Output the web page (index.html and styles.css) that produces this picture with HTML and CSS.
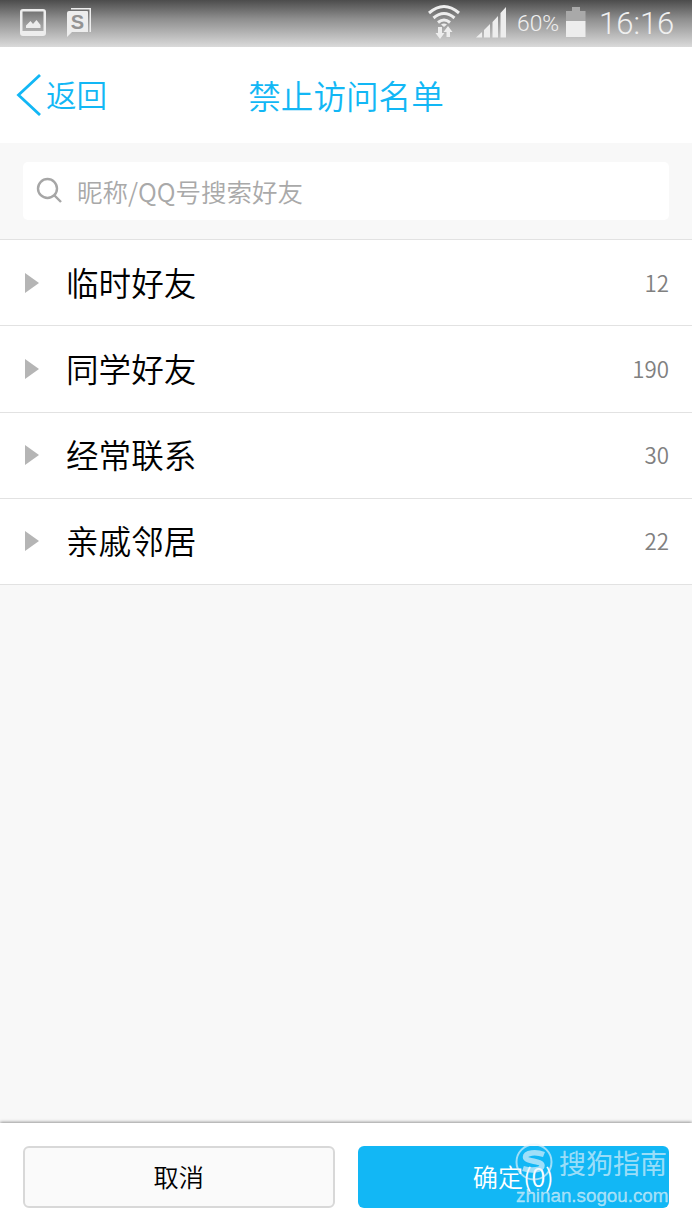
FILE: index.html
```html
<!DOCTYPE html>
<html lang="zh-CN">
<head>
    <meta charset="UTF-8">
    <meta name="viewport" content="width=device-width, initial-scale=1.0">
    <title>禁止访问名单</title>
    <link rel="stylesheet" href="styles.css">
</head>
<body>

<!-- Status bar -->
<div class="status-bar">
    <svg class="icon-picture" width="26" height="28" viewBox="0 0 26 28">
        <path fill-rule="evenodd" d="M3 0H23Q26 0 26 3V24Q26 27 23 27H3Q0 27 0 24V3Q0 0 3 0ZM2.500 2.500V22H23.500V2.500Z"/>
        <path d="M6 19V16.500L10.500 12L13 15L16.500 11L20.500 16V19Z"/>
    </svg>
    <svg class="icon-sogou" width="26" height="30" viewBox="0 0 26 30">
        <path d="M4 0H24V24H22.500V1.500H4Z"/>
        <path d="M2 3H20Q21 3 21 4V24H5L0 29V5Q0 3 2 3Z"/>
        <text x="10.500" y="20.500" class="sogou-letter">S</text>
    </svg>
    <div class="status-right">
        <svg class="icon-wifi" width="34" height="36" viewBox="0 0 34 36">
            <g class="waves">
                <path d="M2 9Q17 -4 32 9"/>
                <path d="M6.500 14Q17 5 27.500 14"/>
                <path d="M11 18.500Q17 13.500 23 18.500"/>
            </g>
            <path d="M14 20.500Q17 18.500 20 20.500L17 23Z"/>
            <path d="M11 23H15V29H17.500L13 35L8.500 29H11Z"/>
            <path d="M19.500 33H23V28H25.500L21 22L16.500 28H19.500Z"/>
        </svg>
        <svg class="icon-signal" width="31" height="31" viewBox="0 0 31 31">
            <path d="M0 30.500L6 25V30.500ZM8 30.500V23L14 17V30.500ZM16.500 30.500V15L22 9V30.500ZM24.500 30.500V6L30 0V30.500Z"/>
        </svg>
        <span class="percent">60%</span>
        <svg class="icon-battery" width="20" height="31" viewBox="0 0 20 31">
            <path class="empty" d="M0 5H6V1H14V5H19.500V15H0Z"/>
            <path d="M0 15H19.500V31H0Z"/>
        </svg>
        <span class="clock">16:16</span>
    </div>
</div>

<!-- Title bar -->
<div class="nav-bar">
    <a class="back">
        <svg width="26" height="44" viewBox="0 0 26 44"><path d="M24 3L2.500 23L24 43"/></svg>
        <span>返回</span>
    </a>
    <h1>禁止访问名单</h1>
</div>

<div class="search">
    <div class="search-box">
        <svg width="28" height="28" viewBox="0 0 28 28">
            <circle cx="11.500" cy="11.500" r="9.500"/>
            <path d="M18.500 18.500L25 25"/>
        </svg>
        <span>昵称/QQ号搜索好友</span>
    </div>
</div>

<!-- Friend groups -->
<ul class="groups">
    <li><span class="arrow"></span><span class="name">临时好友</span><span class="count">12</span></li>
    <li><span class="arrow"></span><span class="name">同学好友</span><span class="count">190</span></li>
    <li><span class="arrow"></span><span class="name">经常联系</span><span class="count">30</span></li>
    <li><span class="arrow"></span><span class="name">亲戚邻居</span><span class="count">22</span></li>
</ul>

<div class="footer">
    <button class="cancel">取消</button>
    <button class="confirm">确定(0)</button>
    <div class="watermark">
        <div class="brand">
            <svg width="40" height="40" viewBox="0 0 40 40">
                <circle cx="19" cy="20" r="17.500"/>
                <path d="M29 12.500C21 9.500 10.500 10.500 10.500 15C10.500 20 27 18.500 27 23.500C27 28.500 16 29 8 26.500"/>
            </svg>
            <span>搜狗指南</span>
        </div>
        <div class="site">zhinan.sogou.com</div>
    </div>
</div>

</body>
</html>
```
FILE: styles.css
```css
* {
    box-sizing: border-box;
}
body {
    margin: 0;
    height: 1230px;
    display: flex;
    flex-direction: column;
    overflow: hidden;
    font-family: "Noto Sans CJK SC", sans-serif;
    font-weight: 350;
    background: #f8f8f8;
}
svg {
    display: block;
    flex: none;
}
.status-bar {
    height: 47px;
    flex: none;
    display: flex;
    align-items: flex-start;
    padding: 0 18px 0 20px;
    background: linear-gradient(#4c4c4c, #8e8e8e 40%, #dadada);
    color: #f0f0f0;
    fill: #ededed;
    font-family: Roboto, sans-serif;
    font-weight: 350;
}
.icon-picture {
    margin-top: 9px;
}
.icon-sogou {
    margin: 8px 0 0 21px;
}
.sogou-letter {
    font: bold 20px "Liberation Sans", sans-serif;
    text-anchor: middle;
    fill: #939393;
}
.status-right {
    display: flex;
    margin-left: auto;
}
.icon-wifi {
    margin: 4px 15px 0 0;
}
.waves {
    fill: none;
    stroke: #ededed;
    stroke-width: 3;
}
.icon-signal {
    margin: 7px 10px 0 0;
}
.percent {
    width: 49px;
    font-size: 22.800px;
    line-height: 48px;
    white-space: nowrap;
}
.icon-battery {
    margin: 6px 13px 0 0;
}
.icon-battery .empty {
    fill: #a9a9a9;
}
.clock {
    width: 75px;
    font-size: 31px;
    line-height: 48px;
    white-space: nowrap;
}
.nav-bar {
    height: 96px;
    flex: none;
    display: grid;
    grid-template-columns: 1fr auto 1fr;
    align-items: center;
    padding: 0 16px 2px;
    background: #fff;
    color: #12b7f5;
}
.back {
    display: flex;
    align-items: center;
    gap: 4px;
    font-size: 30.500px;
    line-height: 44px;
}
.back path {
    fill: none;
    stroke: #12b7f5;
    stroke-width: 2.800;
}
.nav-bar h1 {
    margin: 2px 0 0;
    font-size: 32.600px;
    font-weight: inherit;
    line-height: 48px;
}
.search {
    height: 96px;
    flex: none;
    padding: 19px 23px;
}
.search-box {
    height: 58px;
    display: flex;
    align-items: center;
    gap: 13px;
    padding-left: 13px;
    border-radius: 5px;
    background: #fff;
    color: #a9a9a9;
    font-size: 25.500px;
}
.search-box svg {
    fill: none;
    stroke: #a6a6a6;
    stroke-width: 2.400;
}
.search-box span {
    margin-top: -2px;
}
.groups {
    height: 346px;
    flex: none;
    display: grid;
    grid-template-rows: repeat(4, 1fr);
    margin: 0;
    padding: 0;
    list-style: none;
    border-top: 1px solid #e2e2e2;
    background: #fff;
}
.groups li {
    display: flex;
    align-items: center;
    padding: 0 23px 0 25px;
    border-bottom: 1px solid #e2e2e2;
}
.arrow {
    border-left: 14px solid #b5b5b5;
    border-top: 10px solid transparent;
    border-bottom: 10px solid transparent;
}
.name {
    margin: -2px 0 0 27px;
    font-size: 32.600px;
    line-height: 48px;
    color: #000;
}
.count {
    margin: -2px 0 0 auto;
    font-size: 22.300px;
    color: #808080;
}
.footer {
    position: relative;
    display: grid;
    grid-template-columns: 1fr 1fr;
    gap: 23px;
    height: 107px;
    margin-top: auto;
    padding: 23px;
    background: #fff;
    box-shadow: 0 -1px 3px rgba(0, 0, 0, 0.4);
}
button {
    height: 62px;
    padding: 0 0 2px;
    border-radius: 6px;
    font-family: inherit;
    font-size: 25.200px;
    font-weight: inherit;
}
.cancel {
    border: 2px solid #d8d8d8;
    background: #fafafa;
    color: #000;
}
.confirm {
    border: none;
    background: #12b7f5;
    color: #fff;
}
/* site mark over the confirm button */
.watermark {
    position: absolute;
    top: 17px;
    right: 23px;
    width: 154px;
    color: rgba(235, 245, 250, 0.65);
    font-weight: 400;
    white-space: nowrap;
}
.brand {
    display: flex;
    align-items: center;
    height: 44px;
    gap: 4px;
    font-size: 27px;
}
.brand svg {
    fill: none;
    stroke: rgba(235, 245, 250, 0.65);
    stroke-width: 2;
}
.brand path {
    stroke-width: 5.500;
}
.site {
    margin-left: 1px;
    font: 18.800px/24px "Liberation Sans", sans-serif;
    -webkit-text-stroke: 0.3px rgba(235, 245, 250, 0.65);
}
```
